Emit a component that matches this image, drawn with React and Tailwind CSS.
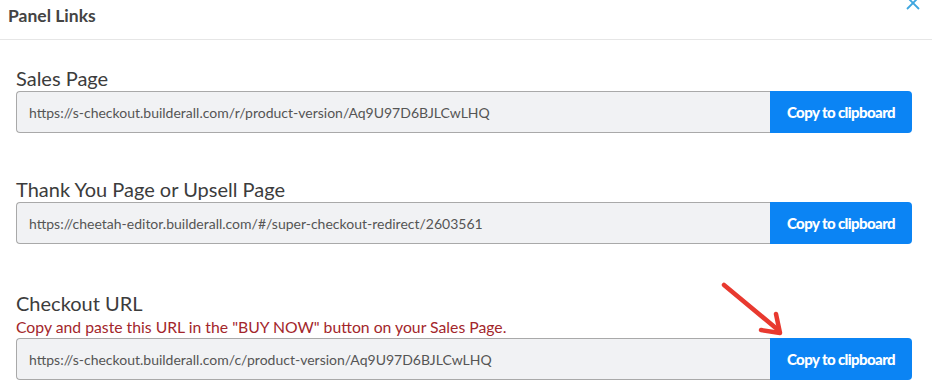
import React from 'react';

const links = [
  { label: 'Sales Page', url: 'https://s-checkout.builderall.com/r/product-version/Aq9U97D6BJLCwLHQ', gap: 'mt-[26px]' },
  { label: 'Thank You Page or Upsell Page', url: 'https://cheetah-editor.builderall.com/#/super-checkout-redirect/2603561', gap: 'mt-[44px]' },
  {
    label: 'Checkout URL',
    url: 'https://s-checkout.builderall.com/c/product-version/Aq9U97D6BJLCwLHQ',
    note: 'Copy and paste this URL in the "BUY NOW" button on your Sales Page.',
    gap: 'mt-[47px]',
  },
];

const LinkRow = ({ url }) => (
  <div className="flex h-[42px]">
    <div className="flex-1 flex items-center pl-3 bg-[#f1f2f4] border border-r-0 border-[#a9a9a9] rounded-l-[4px] text-[14px] text-[#555]">
      {url}
    </div>
    <button className="w-[142px] bg-[#0b84f4] text-white font-black text-[15px] tracking-[-0.6px] rounded-r-[4px]">
      Copy to clipboard
    </button>
  </div>
);

const App = () => {
  return (
    <div className="relative w-[932px] h-[389px] bg-white overflow-hidden font-['Lato','Open_Sans',sans-serif]">
      {/* Header */}
      <div className="flex justify-between h-[40px] border-b border-[#e6e6e6] pl-2 pr-3">
        <h1 className="mt-[3px] text-[17.5px] font-bold text-[#444]">Panel Links</h1>
        <svg width="14" height="14" viewBox="0 0 14 14" className="-mt-[4px]" fill="none" stroke="#3ea6df" strokeWidth="1.8">
          <path d="M1 1L13 13M13 1L1 13" />
        </svg>
      </div>

      {/* Links */}
      <div className="pl-4 pr-5">
        {links.map((l) => (
          <div key={l.label} className={l.gap}>
            <div className="text-[20px] leading-[24px] text-[#3c3c3c] mb-px">{l.label}</div>
            {l.note && <div className="text-[15.75px] leading-[22px] text-[#a3262b]">{l.note}</div>}
            <LinkRow url={l.url} />
          </div>
        ))}
      </div>

      {/* annotation arrow */}
      <svg className="absolute left-[715px] top-[276px]" width="75" height="65" viewBox="0 0 75 65" fill="none" stroke="#e8392f" strokeWidth="4.5" strokeLinecap="round" strokeLinejoin="round">
        <path d="M9 9L62 53" />
        <path d="M46 54L65 57L61 38" />
      </svg>
    </div>
  );
};

export default App;
